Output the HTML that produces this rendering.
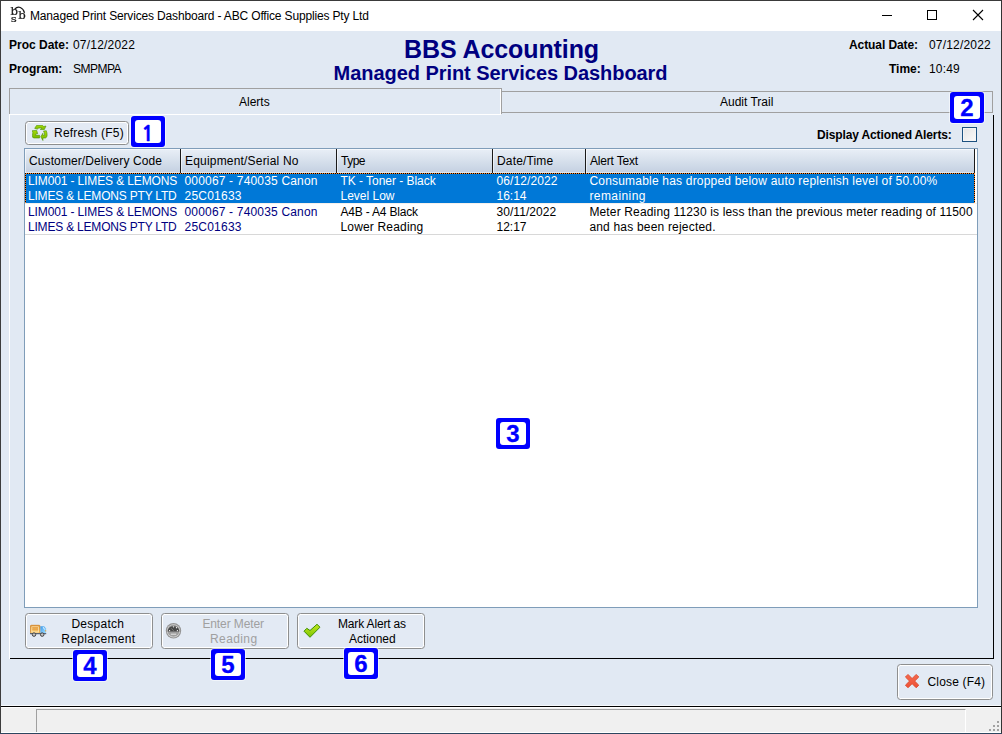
<!DOCTYPE html>
<html><head><meta charset="utf-8">
<style>
*{box-sizing:border-box;margin:0;padding:0}
html,body{width:1002px;height:734px;overflow:hidden;background:#e1e9f3}
body{font-family:"Liberation Sans",sans-serif;font-size:12px;color:#000;position:relative}
.abs{position:absolute;white-space:nowrap}
#win{position:absolute;left:0;top:0;width:1002px;height:734px;background:#e1e9f3;overflow:hidden}
#titlebar{position:absolute;left:1px;top:1px;width:1000px;height:30px;background:#fff}
#ttext{left:30px;top:9px;font-size:12px;line-height:14px;color:#000;letter-spacing:-0.16px}
.b{font-weight:bold}
.navy{color:#000080}
.lbl{position:absolute;white-space:nowrap;line-height:14px;font-size:12px}
.badge{position:absolute;width:34px;height:31px;border-radius:3px;background:#00f;box-shadow:0 0 0 1px rgba(255,255,255,.55);color:#00f;font-size:24px;line-height:31px;text-align:center;-webkit-text-stroke:0.3px #00f}
.badge::before{content:"";position:absolute;left:4px;top:4px;right:4px;bottom:4px;background:#fff;border-radius:3px}
.badge b{position:relative;font-weight:bold;display:block}
.badge b.one{font-family:"NanumGothic","Liberation Sans",sans-serif;font-size:21px;-webkit-text-stroke:0.5px #00f;top:1.500px;left:-0.500px}
.btn{position:absolute;border:1px solid #8e8f8f;border-radius:3.5px;background:#e3eaf4;box-shadow:inset 0 0 0 1px #fff;font-size:12px}
.btn span{position:absolute;white-space:nowrap;line-height:15px}
.btn svg{position:absolute}
.hdr{position:absolute;top:1px;height:23px;line-height:23px;white-space:nowrap}
.sep{position:absolute;top:0;width:1px;height:24px;background:#1a1a1a;box-shadow:1px 0 0 rgba(255,255,255,.55)}
.focus{background:repeating-linear-gradient(90deg,#000 0 1px,#ff8728 1px 2px) 0 0/100% 1px no-repeat,repeating-linear-gradient(180deg,#000 0 1px,#ff8728 1px 2px) 0 0/1px 100% no-repeat,repeating-linear-gradient(180deg,#000 0 1px,#ff8728 1px 2px) 100% 0/1px 100% no-repeat}
.cell{position:absolute;line-height:15px;white-space:nowrap}
.cell i{font-style:normal;position:absolute;left:0;white-space:nowrap}
</style></head><body>
<div id="win">
<!-- title bar -->
<div id="titlebar"></div>
<div class="abs" id="ttext">Managed Print Services Dashboard - ABC Office Supplies Pty Ltd</div>
<svg class="abs" style="left:8.600px;top:4px;will-change:transform" width="20" height="22" viewBox="0 0 20 22"><g font-family="DejaVu Serif, Liberation Serif, serif" fill="#1a1a1a" stroke="#1a1a1a" stroke-width="0.200"><text transform="translate(1.500 10.750) scale(1.140 1)" font-size="10.300">b</text><text transform="translate(9.200 15) scale(1.140 1)" font-size="10.300">b</text><text transform="translate(1.700 18) scale(1.140 0.960)" font-size="10.300">s</text></g><path d="M5.800 5Q8.300 2.500 11.300 3.500Q14.500 4.800 15.500 8.800" fill="none" stroke="#1a1a1a" stroke-width="1.300"/></svg>
<svg class="abs" style="left:876px;top:5px" width="120" height="22" viewBox="0 0 120 22"><path d="M6 10.500h10" stroke="#000" stroke-width="1" fill="none"/><rect x="51.500" y="5.500" width="9" height="9" fill="none" stroke="#000" stroke-width="1"/><path d="M97 5l10 10M107 5l-10 10" stroke="#000" stroke-width="1.100" fill="none"/></svg>

<!-- header labels -->
<div class="lbl b" id="t_pd" style="left:9px;top:38px">Proc Date:</div>
<div class="lbl" id="t_pdv" style="left:73px;top:38px;letter-spacing:0.2px">07/12/2022</div>
<div class="lbl b" id="t_pg" style="left:9px;top:62px">Program:</div>
<div class="lbl" id="t_pgv" style="left:73px;top:62px;letter-spacing:-0.5px">SMPMPA</div>
<div class="lbl b navy" id="t_h1" style="left:404px;letter-spacing:-0.09px;top:35px;font-size:25px;line-height:28px">BBS Accounting</div>
<div class="lbl b navy" id="t_h2" style="left:333.6px;letter-spacing:-0.055px;top:61px;font-size:20px;line-height:24px">Managed Print Services Dashboard</div>
<div class="lbl b" id="t_ad" style="left:849px;top:38px;letter-spacing:-0.09px">Actual Date:</div>
<div class="lbl" id="t_adv" style="left:929px;top:38px;letter-spacing:0.18px">07/12/2022</div>
<div class="lbl b" id="t_tm" style="left:889px;top:62px">Time:</div>
<div class="lbl" id="t_tmv" style="left:929px;top:62px;letter-spacing:0.15px">10:49</div>

<!-- tabs -->
<div class="abs" style="left:501px;top:91px;width:492px;height:22px;border:1px solid #a0a0a0;border-left:none"></div>
<div class="lbl" id="t_tab2" style="left:720px;top:95px">Audit Trail</div>
<div class="abs" style="left:9px;top:88px;width:493px;height:26px;border-top:1px solid #a0a0a0;border-left:1px solid #a0a0a0;border-right:1px solid #a0a0a0;background:#e1e9f3"></div>
<div class="abs" style="left:500px;top:89px;width:1px;height:25px;background:#fff"></div>
<div class="lbl" id="t_tab1" style="left:239px;top:95px">Alerts</div>
<!-- panel -->
<div class="abs" style="left:9px;top:114px;width:492px;height:1px;background:#fff"></div>
<div class="abs" style="left:9px;top:114px;width:1px;height:545px;background:#fff"></div>
<div class="abs" style="left:993px;top:115px;width:1px;height:544px;background:#000"></div>
<div class="abs" style="left:10px;top:658px;width:984px;height:1px;background:#000"></div>

<!-- refresh -->
<div class="btn" style="left:25px;top:121px;width:104px;height:24px"><span id="t_rf" style="left:28px;top:4px;letter-spacing:0.21px">Refresh (F5)</span>
<svg style="left:6px;top:3px" width="16" height="16" viewBox="0 0 16 16"><defs><linearGradient id="gg" x1="0" y1="0" x2="0" y2="1"><stop offset="0" stop-color="#a6dc08"/><stop offset="1" stop-color="#78b800"/></linearGradient></defs><g fill="url(#gg)" stroke="#4c9000" stroke-width="0.600" stroke-linejoin="round"><path d="M2.700 3.400L4.500 0.500L10.500 0.300L11.500 1.600L14 1L12.300 4.600L8.300 4.500L9.800 3.100L6.800 3L5.400 4.100Z"/><path d="M0.100 5.700L4.700 5.400L5.700 8.800L4.600 8.200L3.600 10.300L7.600 10.300L7.600 13L1.500 13Q0.300 12.500 0.400 10.500L0.800 7.600Z"/><path d="M11.500 6.100L14.300 5.700Q15.300 8 15.100 10.500Q14.800 12.600 13.500 13L10.900 13L10.900 15.500L8.800 11.700L10.900 8.200L10.900 10.300L12.600 10.300Q12.900 8.200 11.500 6.100Z"/></g></svg></div>
<div class="badge" style="left:131px;top:116px"><b class="one">1</b></div>
<div class="lbl b" id="t_daa" style="left:817px;top:128px;letter-spacing:-0.13px">Display Actioned Alerts:</div>
<div class="abs" style="left:962px;top:127px;width:15px;height:15px;border:1px solid #1c5180;background:linear-gradient(135deg,#e4e4e4,#fafafa);box-shadow:inset 0 0 0 1px #f4f4f4"></div>
<div class="badge" style="left:950px;top:92px"><b>2</b></div>

<!-- grid -->
<div class="abs" style="left:24px;top:148px;width:954px;height:460px;border:1px solid #7f9db9;background:#fff;overflow:hidden">
  <div class="abs" style="left:0;top:0;width:949px;height:24px;box-shadow:inset 1px 1px 0 rgba(255,255,255,.6);background:linear-gradient(#e9eff7 0,#dae3ee 40%,#c5d1e2 23px,#dde5ef 23px)"></div>
  <div class="hdr" id="h1" style="left:4px;letter-spacing:0.107px">Customer/Delivery Code</div><div class="sep" style="left:155px"></div>
  <div class="hdr" id="h2" style="left:160px;letter-spacing:0.19px">Equipment/Serial No</div><div class="sep" style="left:311px"></div>
  <div class="hdr" id="h3" style="left:316px;letter-spacing:-0.5px">Type</div><div class="sep" style="left:467px"></div>
  <div class="hdr" id="h4" style="left:472px;letter-spacing:0.16px">Date/Time</div><div class="sep" style="left:560px"></div>
  <div class="hdr" id="h5" style="left:565px;letter-spacing:-0.19px">Alert Text</div><div class="sep" style="left:949px"></div>
  <div class="abs" style="left:0;top:24px;width:950px;height:30px;background:#0078d7;color:#fff"><div class="abs focus" style="left:0;top:0;width:950px;height:30px"></div>
    <div class="cell" style="left:3px;top:0"><i id="r1a1" style="top:1px;letter-spacing:-0.125px">LIM001 - LIMES &amp; LEMONS</i><i id="r1a2" style="top:16px;letter-spacing:-0.2px">LIMES &amp; LEMONS PTY LTD</i></div>
    <div class="cell" style="left:159.5px;top:0"><i id="r1b1" style="top:1px;letter-spacing:0.175px">000067 - 740035 Canon</i><i id="r1b2" style="top:16px;letter-spacing:0.23px">25C01633</i></div>
    <div class="cell" style="left:315.5px;top:0"><i id="r1c1" style="top:1px;letter-spacing:-0.04px">TK - Toner - Black</i><i id="r1c2" style="top:16px">Level Low</i></div>
    <div class="cell" style="left:471.5px;top:0"><i id="r1d1" style="top:1px;letter-spacing:0.1px">06/12/2022</i><i id="r1d2" style="top:16px">16:14</i></div>
    <div class="cell" style="left:564.4px;top:0"><i id="r1e1" style="top:1px;letter-spacing:0.2px">Consumable has dropped below auto replenish level of 50.00%</i><i id="r1e2" style="top:16px;letter-spacing:0.42px">remaining</i></div>
  </div>
  <div class="abs" style="left:0;top:54px;width:952px;height:1px;background:#f5f0ec"></div>
  <div class="abs" style="left:0;top:55px;width:952px;height:31px;border-bottom:1px solid #d8d8d8">
    <div class="cell navy" style="left:3px;top:0"><i id="r2a1" style="top:1px;letter-spacing:-0.125px">LIM001 - LIMES &amp; LEMONS</i><i id="r2a2" style="top:16px;letter-spacing:-0.2px">LIMES &amp; LEMONS PTY LTD</i></div>
    <div class="cell navy" style="left:159.5px;top:0"><i id="r2b1" style="top:1px;letter-spacing:0.175px">000067 - 740035 Canon</i><i id="r2b2" style="top:16px;letter-spacing:0.23px">25C01633</i></div>
    <div class="cell" style="left:315.5px;top:0"><i id="r2c1" style="top:1px;letter-spacing:-0.19px">A4B - A4 Black</i><i id="r2c2" style="top:16px;letter-spacing:0.17px">Lower Reading</i></div>
    <div class="cell" style="left:471.5px;top:0"><i id="r2d1" style="top:1px;letter-spacing:0.05px">30/11/2022</i><i id="r2d2" style="top:16px">12:17</i></div>
    <div class="cell" style="left:564.4px;top:0"><i id="r2e1" style="top:1px;letter-spacing:0.15px">Meter Reading 11230 is less than the previous meter reading of 11500</i><i id="r2e2" style="top:16px;letter-spacing:0.19px">and has been rejected.</i></div>
  </div>
</div>
<div class="badge" style="left:496px;top:418px"><b>3</b></div>

<!-- bottom buttons -->
<div class="btn" style="left:25px;top:613px;width:128px;height:36px"><span id="b1a" style="left:45.4px;top:3px;letter-spacing:0.28px">Despatch</span><span id="b1b" style="left:35.3px;top:18px;letter-spacing:0.3px">Replacement</span>
<svg style="left:4px;top:10px" width="18" height="15" viewBox="0 0 18 15"><defs><linearGradient id="og" x1="0" y1="0" x2="0" y2="1"><stop offset="0" stop-color="#e09430"/><stop offset="1" stop-color="#ffd984"/></linearGradient><linearGradient id="bg2" x1="0" y1="0" x2="1" y2="1"><stop offset="0" stop-color="#3a98ea"/><stop offset="1" stop-color="#a4e0ff"/></linearGradient></defs><rect x="0.400" y="1.300" width="9.600" height="8" rx="0.900" fill="url(#og)" stroke="#d2852a" stroke-width="0.800"/><rect x="1.900" y="2.800" width="6.600" height="5.200" fill="none" stroke="#ffe8b8" stroke-width="0.700"/><path d="M2.300 3.800h5.800M2.300 5.600h5.800" stroke="#e7a048" stroke-width="0.800"/><path d="M10.400 2.200h3.800l1.900 2.200v4.800h-5.700z" fill="url(#bg2)"/><path d="M13.200 3.200l1.400 2.300" stroke="#fff" stroke-width="0.900"/><rect x="15.100" y="6.300" width="1.100" height="1.100" fill="#f7a21b"/><rect x="0" y="9.100" width="16.200" height="1.100" fill="#4d5a6e"/><circle cx="4" cy="10.600" r="1.750" fill="#c4c4c4" stroke="#404040" stroke-width="1"/><circle cx="12.200" cy="10.600" r="1.750" fill="#c4c4c4" stroke="#404040" stroke-width="1"/></svg></div>
<div class="btn" style="left:161px;top:613px;width:128px;height:36px;color:#a0a0a0"><span id="b2a" style="left:40.4px;top:3px;letter-spacing:-0.1px">Enter Meter</span><span id="b2b" style="left:48px;top:18px;letter-spacing:0.4px">Reading</span>
<svg style="left:3px;top:8px" width="17" height="17" viewBox="0 0 17 17"><circle cx="8.500" cy="8.800" r="7.700" fill="#949494"/><circle cx="8.500" cy="8.800" r="6.600" fill="#dcdcdc"/><circle cx="8.500" cy="8.800" r="6" fill="#9e9e9e"/><path d="M2.550 9.600A6 6 0 0 1 14.450 9.600Z" fill="#484848"/><rect x="5.800" y="11.600" width="5.400" height="1.300" fill="#d6d6d6"/><g fill="#fff"><circle cx="4.600" cy="8.600" r="0.650"/><circle cx="8.500" cy="4.800" r="0.650"/><circle cx="11.500" cy="5.700" r="0.650"/><circle cx="12.400" cy="8.600" r="0.650"/></g><path d="M6.400 6.400l2.300 2.400" stroke="#787878" stroke-width="1"/></svg></div>
<div class="btn" style="left:297px;top:613px;width:128px;height:36px"><span id="b3a" style="left:40px;top:3px;letter-spacing:-0.16px">Mark Alert as</span><span id="b3b" style="left:51px;top:18px">Actioned</span>
<svg style="left:5px;top:9px" width="18" height="16" viewBox="0 0 18 16"><defs><linearGradient id="cg" x1="0" y1="0" x2="0" y2="1"><stop offset="0" stop-color="#c4e820"/><stop offset="1" stop-color="#7cc400"/></linearGradient></defs><path d="M1 8.200L3.800 5.300L7 7.500L14 1.300L17 4.200L7 14.300Z" fill="url(#cg)" stroke="#3f9000" stroke-width="1" stroke-linejoin="round"/></svg></div>
<div class="badge" style="left:73px;top:650px"><b>4</b></div>
<div class="badge" style="left:211px;top:649px"><b>5</b></div>
<div class="badge" style="left:344px;top:648px"><b>6</b></div>
<div class="btn" style="left:897px;top:664px;width:96px;height:36px"><span id="b4" style="left:29.5px;top:10px;letter-spacing:0.17px">Close (F4)</span>
<svg style="left:6px;top:8px" width="17" height="17" viewBox="0 0 17 17"><defs><linearGradient id="xg" x1="0" y1="0" x2="0" y2="1"><stop offset="0" stop-color="#f4694e"/><stop offset="1" stop-color="#ee5136"/></linearGradient></defs><path d="M1.400 4L4 1.400L8.100 5.500L12.200 1.400L14.800 4L10.700 8.100L14.800 12.200L12.200 14.800L8.100 10.700L4 14.800L1.400 12.200L5.500 8.100Z" fill="url(#xg)" stroke="#da4426" stroke-width="0.800" stroke-linejoin="round"/></svg></div>

<!-- status bar -->
<div class="abs" style="left:1px;top:705px;width:1000px;height:1px;background:#f6f9fc"></div>
<div class="abs" style="left:1px;top:706px;width:1000px;height:1px;background:#000"></div>
<div class="abs" style="left:1px;top:707px;width:1000px;height:26px;background:#f0f0f0;border-top:1px solid #fff;border-bottom:1px solid #fff"></div>
<div class="abs" style="left:36px;top:709px;width:930px;height:23px;border-left:1px solid #a0a0a0;border-top:1px solid #a0a0a0;border-right:1px solid #fff"></div>
<svg class="abs" style="left:988px;top:720px" width="12" height="12" viewBox="0 0 12 12" fill="#a2a2a2" shape-rendering="crispEdges"><rect x="9" y="1" width="2" height="2"/><rect x="5" y="5" width="2" height="2"/><rect x="9" y="5" width="2" height="2"/><rect x="1" y="9" width="2" height="2"/><rect x="5" y="9" width="2" height="2"/><rect x="9" y="9" width="2" height="2"/></svg>

<!-- window border -->
<div class="abs" style="left:0;top:0;width:1002px;height:1px;background:#3a3a3a"></div>
<div class="abs" style="left:0;top:0;width:1px;height:734px;background:#3c3c3c"></div>
<div class="abs" style="left:1001px;top:0;width:1px;height:734px;background:#333"></div>
<div class="abs" style="left:0;top:733px;width:1002px;height:1px;background:#2c4660"></div>
</div>
</body></html>
